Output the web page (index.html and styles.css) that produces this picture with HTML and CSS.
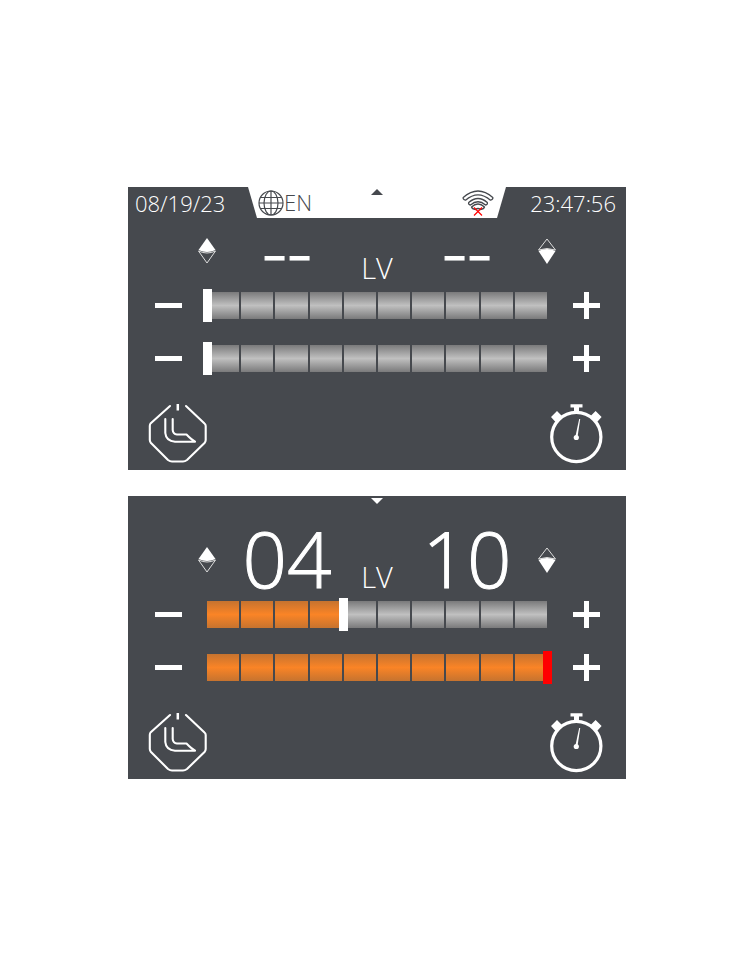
FILE: index.html
```html
<!DOCTYPE html>
<html lang="en">
<head>
    <meta charset="UTF-8">
    <meta name="viewport" content="width=device-width, initial-scale=1.0">
    <title>Seat Level Control</title>
    <link rel="stylesheet" href="styles.css">
</head>
<body>

    <!-- Shared icons -->
    <svg class="sprite" aria-hidden="true">
        <symbol id="upper" viewBox="0 0 20 28">
            <path d="M10 1 L18.500 13 Q10 17 1.500 13 Z" fill="#fff"/>
            <path d="M1.500 14 L10 26 L18.500 14 Q10 18 1.500 14 Z" fill="none" stroke="#ddd"/>
        </symbol>
        <symbol id="lower" viewBox="0 0 20 28">
            <path d="M1.500 13 L10 2 L18.500 13 Q10 10 1.500 13 Z" fill="none" stroke="#ddd"/>
            <path d="M10 27 L1.500 14 Q10 10 18.500 14 Z" fill="#fff"/>
        </symbol>
        <symbol id="seat" viewBox="0 0 60 62">
            <g fill="none" stroke="#fff" stroke-width="2.100" stroke-linecap="round" stroke-linejoin="round">
                <path d="M22 4 L2.500 21.500 Q1.800 22.500 1.800 24 V38 Q1.800 39.500 3 41 L20 58 Q22 59.500 24 59.500 H35 Q37 59.500 39 58 L56.500 41 Q57.700 39.500 57.700 38 V24 Q57.700 22.500 56.500 21.500 L38 4"/>
                <path d="M17.300 17 V31 Q18 39 27 39.700 H47 Q43 37 41 35 L38.500 32.500 H29 Q25 32 24.700 28 V17"/>
            </g>
            <path d="M29.800 2 V8.500" stroke="#fff" stroke-width="2.500"/>
        </symbol>
        <symbol id="timer" viewBox="0 0 58 62">
            <circle cx="28.300" cy="35" r="24.600" fill="none" stroke="#fff" stroke-width="3.200"/>
            <path d="M22.500 2.300 H34.500 V5.500 H31 V10 H26 V5.500 H22.500 Z" fill="#fff"/>
            <path d="M3 15 L9 9 L14 14 L12 16 L13 17 L10 20 L9 19 L7.500 20 Z" fill="#fff"/>
            <path d="M53.600 15 L47.600 9 L42.600 14 L44.600 16 L43.600 17 L46.600 20 L47.600 19 L49.100 20 Z" fill="#fff"/>
            <path d="M27.300 35 L31.200 17 H32.200 L29.500 35 Z" fill="#fff"/>
            <circle cx="28.300" cy="35.500" r="2.600" fill="#fff"/>
        </symbol>
    </svg>

    <main class="screens">
        <section class="panel">
            <header class="status">
                <time class="date">08/19/23</time>
                <div class="status-center">
                    <button type="button" class="language">
                        <svg class="globe" viewBox="0 0 26 26">
                            <g fill="none" stroke="#46494e" stroke-width="1.200">
                                <circle cx="13" cy="13" r="12"/>
                                <ellipse cx="13" cy="13" rx="7" ry="12"/>
                                <path d="M13 1 V25 M1 13 H25 M3 7.500 H23 M3 18.500 H23"/>
                            </g>
                        </svg>EN
                    </button>
                    <button type="button" class="toggle toggle-up" aria-label="Close status bar"></button>
                    <svg class="wifi" viewBox="0 0 32 26" role="img" aria-label="Wi-Fi disconnected">
                        <g fill="none" stroke="#46494e" stroke-width="1.300" stroke-linejoin="round">
                            <path d="M1.200 7.500 Q16 -5.500 30.800 7.500 Q31.300 9.500 28.500 10.200 Q16 -0.500 3.500 10.200 Q0.700 9.500 1.200 7.500 Z"/>
                            <path d="M8.500 15 Q6 14.500 6.700 12.500 Q16 4.500 25.300 12.500 Q26 14.500 23.500 15 Q16 8.500 8.500 15 Z"/>
                            <path d="M13.500 19.500 Q10 19 9.500 17 Q16 11 22.500 17 Q22 19 18.500 19.500 Q16 17.500 13.500 19.500 Z"/>
                        </g>
                        <path d="M12 17.500 L20 25.500 M20 17.500 L12 25.500" stroke="#f00" stroke-width="1.200"/>
                    </svg>
                </div>
                <time class="clock">23:47:56</time>
            </header>
            <div class="display">
                <svg class="marker"><use href="#upper"/></svg>
                <output class="value" for="upper1">--</output>
                <span class="unit">LV</span>
                <output class="value" for="lower1">--</output>
                <svg class="marker"><use href="#lower"/></svg>
            </div>
            <div class="levels">
                <div class="level">
                    <button type="button" class="step minus" aria-label="Decrease upper level"></button>
                    <input type="range" id="upper1" class="slider" min="0" max="10" value="0" aria-label="Upper level" style="--level: 0">
                    <button type="button" class="step plus" aria-label="Increase upper level"></button>
                </div>
                <div class="level">
                    <button type="button" class="step minus" aria-label="Decrease lower level"></button>
                    <input type="range" id="lower1" class="slider" min="0" max="10" value="0" aria-label="Lower level" style="--level: 0">
                    <button type="button" class="step plus" aria-label="Increase lower level"></button>
                </div>
            </div>
            <footer class="actions">
                <button type="button" aria-label="Seat"><svg class="icon-seat"><use href="#seat"/></svg></button>
                <button type="button" aria-label="Timer"><svg class="icon-timer"><use href="#timer"/></svg></button>
            </footer>
        </section>

        <section class="panel">
            <header class="status status-closed">
                <button type="button" class="toggle toggle-down" aria-label="Open status bar"></button>
            </header>
            <div class="display">
                <svg class="marker"><use href="#upper"/></svg>
                <output class="value" for="upper2">04</output>
                <span class="unit">LV</span>
                <output class="value" for="lower2">10</output>
                <svg class="marker"><use href="#lower"/></svg>
            </div>
            <div class="levels">
                <div class="level">
                    <button type="button" class="step minus" aria-label="Decrease upper level"></button>
                    <input type="range" id="upper2" class="slider" min="0" max="10" value="4" aria-label="Upper level" style="--level: 4">
                    <button type="button" class="step plus" aria-label="Increase upper level"></button>
                </div>
                <div class="level">
                    <button type="button" class="step minus" aria-label="Decrease lower level"></button>
                    <input type="range" id="lower2" class="slider slider-max" min="0" max="10" value="10" aria-label="Lower level" style="--level: 10">
                    <button type="button" class="step plus" aria-label="Increase lower level"></button>
                </div>
            </div>
            <footer class="actions">
                <button type="button" aria-label="Seat"><svg class="icon-seat"><use href="#seat"/></svg></button>
                <button type="button" aria-label="Timer"><svg class="icon-timer"><use href="#timer"/></svg></button>
            </footer>
        </section>
    </main>

</body>
</html>
```
FILE: styles.css
```css
* {
    box-sizing: border-box;
}

body {
    margin: 0;
    background-color: #fff;
    font-family: "Open Sans", Lato, sans-serif;
    font-weight: 300;
    color: #fff;
}

button {
    display: block;
    padding: 0;
    border: none;
    background: none;
    font: inherit;
    color: inherit;
    cursor: pointer;
}

svg {
    display: block;
}

.sprite {
    position: absolute;
    width: 0;
    height: 0;
}

.screens {
    display: flex;
    flex-direction: column;
    gap: 26px;
    padding: 187px 124px 183px 128px;
}

.panel {
    background-color: #46494e;
}

/* Status bar */
.status {
    display: grid;
    grid-template-columns: 120px 1fr 120px;
    height: 31px;
    font-size: 22px;
    line-height: 32px;
}

.date {
    padding-left: 7px;
}

.clock {
    padding-right: 10px;
    text-align: right;
}

.status-center {
    display: grid;
    grid-template-columns: 1fr 12px 1fr;
    height: 31px;
    padding: 0 12px;
    background-color: #fff;
    color: #46494e;
    clip-path: polygon(0 0, 100% 0, calc(100% - 9px) 100%, 9px 100%);
}

.language {
    display: flex;
    align-items: center;
    margin-left: -2px;
    line-height: 31px;
}

.globe {
    width: 26px;
    height: 26px;
}

.wifi {
    width: 32px;
    height: 26px;
    margin-top: 3px;
    justify-self: end;
}

.status-closed {
    display: flex;
    justify-content: center;
}

.toggle {
    width: 12px;
    height: 6px;
    margin-top: 2px;
}

.toggle-up {
    background-color: #46494e;
    clip-path: polygon(50% 0, 100% 100%, 0 100%);
}

.toggle-down {
    background-color: #fff;
    clip-path: polygon(0 0, 100% 0, 50% 100%);
}

/* Level readout */
.display {
    display: grid;
    grid-template-columns: 20px 1fr 40px 1fr 20px;
    align-items: baseline;
    height: 71px;
    padding: 0 69px;
    text-align: center;
}

.marker {
    width: 20px;
    height: 28px;
    align-self: start;
    margin-top: 19px;
}

.value {
    font-size: 78px;
    line-height: 62px;
    -webkit-text-stroke: 1px #fff;
}

.unit {
    font-size: 29px;
    line-height: 32px;
}

/* Sliders */
.levels {
    display: grid;
    gap: 20px;
}

.level {
    display: flex;
    align-items: center;
    gap: 21px;
    padding: 0 26px 0 27px;
}

.step {
    flex: none;
    width: 27px;
    height: 27px;
    background-repeat: no-repeat;
    background-position: center;
}

.minus {
    background-image: linear-gradient(#fff, #fff);
    background-size: 27px 5px;
}

.plus {
    background-image: linear-gradient(#fff, #fff), linear-gradient(#fff, #fff);
    background-size: 27px 5px, 5px 27px;
}

.slider {
    --track: calc(100% - 9px);
    appearance: none;
    flex: 1;
    min-width: 0;
    height: 33px;
    margin: 0;
    background-color: transparent;
    background-image:
        repeating-linear-gradient(90deg, transparent 0 calc((100% + 2px) / 10 - 2px), #46494e calc((100% + 2px) / 10 - 2px) calc((100% + 2px) / 10)),
        linear-gradient(#c6732f, #fa8426 50%, #c6732f),
        linear-gradient(#7a7a7b, #c0c0c0 50%, #7a7a7b);
    background-size:
        var(--track) 27px,
        calc((100% - 9px) * var(--level) / 10) 27px,
        var(--track) 27px;
    background-position: 4px 3px;
    background-repeat: no-repeat;
}

.slider::-webkit-slider-thumb {
    appearance: none;
    width: 9px;
    height: 33px;
    background-color: #fff;
}

.slider-max::-webkit-slider-thumb {
    background-color: #f00;
}

/* Bottom buttons */
.actions {
    display: flex;
    justify-content: space-between;
    padding: 27px 20px 6px;
}

.icon-seat {
    width: 60px;
    height: 62px;
}

.icon-timer {
    width: 58px;
    height: 62px;
}
```
